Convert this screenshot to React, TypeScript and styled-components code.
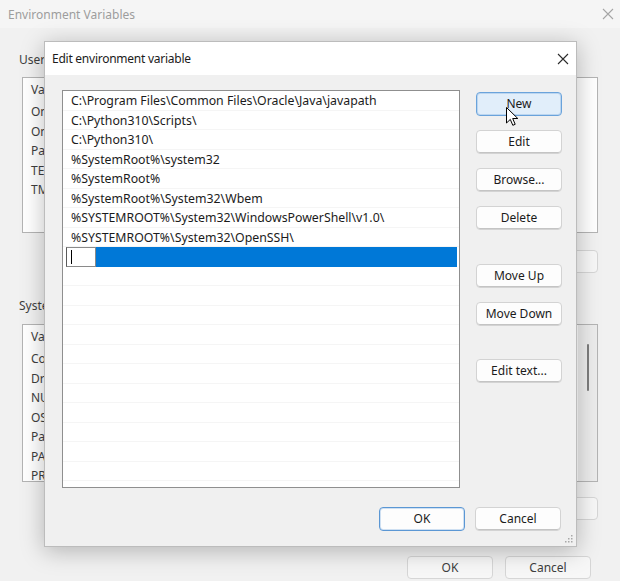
import React from 'react';
import styled, { createGlobalStyle } from 'styled-components';

const GlobalStyle = createGlobalStyle`
  html, body {
    margin: 0;
    padding: 0;
  }
  body {
    font-family: "Noto Sans", "Open Sans", sans-serif;
    font-size: 12px;
    color: #1b1b1b;
    background: #f0f0f0;
  }
  * {
    box-sizing: border-box;
  }
`;

const Desktop = styled.div`
  position: relative;
  width: 620px;
  height: 581px;
  overflow: hidden;
  background: #f1f1f1;
`;

/* ---------- background window (Environment Variables) ---------- */

const BackWindow = styled.div`
  display: flex;
  flex-direction: column;
  height: 100%;
  color: #3e3e3e;
`;

const BackTitleBar = styled.div`
  height: 28px;
  flex: none;
  display: flex;
  align-items: center;
  justify-content: space-between;
  padding: 0 6px 0 8px;
  color: #9d9d9d;
  background: #f5f5f5;
`;

const BackBody = styled.div`
  display: flex;
  flex-direction: column;
  padding: 0 22px;
`;

const GroupLabel = styled.div<{ $top: number }>`
  height: 16px;
  line-height: 16px;
  margin: ${p => p.$top}px 0 0 -3px;
`;

const BackList = styled.div<{ $height: number; $top: number }>`
  display: flex;
  height: ${p => p.$height}px;
  margin-top: ${p => p.$top}px;
  background: #fff;
  border: 1px solid #b4b4b4;
`;

const BackColumn = styled.div`
  flex: 1;
  display: flex;
  flex-direction: column;
`;

const BackHeader = styled.div`
  height: 24px;
  line-height: 24px;
  padding-left: 8px;
  flex: none;
`;

const BackRow = styled.div`
  height: 19.5px;
  line-height: 19.5px;
  padding-left: 8px;
  flex: none;
  white-space: nowrap;
`;

const ScrollTrack = styled.div`
  width: 19px;
  flex: none;
  background: #ececec;
  display: flex;
  justify-content: center;
  padding-top: 19px;
`;

const ScrollThumb = styled.div`
  width: 2px;
  height: 47px;
  border-radius: 1px;
  background: #7c7c7c;
`;

const BackButtonRow = styled.div<{ $top: number }>`
  display: flex;
  justify-content: flex-end;
  gap: 10px;
  margin-top: ${p => p.$top}px;
`;

const BackButton = styled.div`
  width: 86px;
  height: 23px;
  line-height: 21px;
  text-align: center;
  background: #f7f7f7;
  border: 1px solid #d6d6d6;
  border-radius: 4px;
`;

const BackFooter = styled.div`
  display: flex;
  justify-content: flex-end;
  gap: 12px;
  padding: 36px 29px 0 0;
`;

/* ---------- foreground dialog (Edit environment variable) ---------- */

const Dialog = styled.div`
  position: absolute;
  left: 44px;
  top: 41px;
  width: 533px;
  height: 506px;
  display: flex;
  flex-direction: column;
  background: #f0f0f0;
  border: 1px solid #bcbcbc;
  box-shadow: 0 4px 22px rgba(0, 0, 0, 0.26);
`;

const TitleBar = styled.div`
  height: 33px;
  flex: none;
  display: flex;
  align-items: center;
  justify-content: space-between;
  padding: 0 7px 0 7px;
  background: #fff;
  color: #1b1b1b;
  letter-spacing: -0.25px;
`;

const DialogBody = styled.div`
  display: flex;
  gap: 16px;
  padding: 15px 14px 0 17px;
`;

const PathList = styled.div`
  width: 398px;
  height: 398px;
  flex: none;
  background: #fff;
  border: 1px solid #8f8f8f;
  overflow: hidden;
`;

const PathRow = styled.div`
  height: 19.5px;
  line-height: 19px;
  padding-left: 8px;
  font-size: 12.3px;
  white-space: nowrap;
  border-bottom: 1px solid #f5f5f5;
`;

const SelectedRow = styled.div`
  height: 19.5px;
  margin: 0 2px 0 3px;
  display: flex;
  background: #0078d7;
`;

const EditBox = styled.div`
  width: 30px;
  height: 100%;
  background: #fff;
  border: 1px solid #8a8a8a;
  border-left-color: #5a5a5a;
  padding: 2px 0 0 4px;
`;

const Caret = styled.div`
  width: 1px;
  height: 14px;
  background: #000;
`;

const ButtonColumn = styled.div`
  display: flex;
  flex-direction: column;
  gap: 14px;
  padding-top: 2px;
`;

const Spacer = styled.div<{ $h: number }>`
  height: ${p => p.$h}px;
`;

const Button = styled.div<{ $hot?: boolean; $primary?: boolean }>`
  width: 86px;
  height: 24px;
  line-height: 22px;
  text-align: center;
  color: #1b1b1b;
  border-radius: 4px;
  background: ${p => (p.$hot ? '#e1eefa' : '#fdfdfd')};
  border: 1px solid ${p => (p.$hot ? '#6aa3db' : p.$primary ? '#5b97d4' : '#d3d3d3')};
  box-shadow: ${p =>
    p.$hot || p.$primary ? 'inset 0 0 0 1px rgba(120,170,220,0.35)' : 'inset 0 -1px 0 #c4c4c4'};
`;

const DialogFooter = styled.div`
  display: flex;
  justify-content: flex-end;
  gap: 10px;
  padding: 19px 15px 0 0;
`;

const Grip = styled.svg`
  position: absolute;
  right: 3px;
  bottom: 3px;
`;

const Cursor = styled.svg`
  position: absolute;
  left: 506px;
  top: 107px;
`;

const CloseIcon = ({ color }: { color: string }) => (
  <svg width="12" height="12" viewBox="0 0 12 12">
    <path d="M1 1 L11 11 M11 1 L1 11" stroke={color} strokeWidth="1.1" fill="none" />
  </svg>
);

const paths = [
  'C:\\Program Files\\Common Files\\Oracle\\Java\\javapath',
  'C:\\Python310\\Scripts\\',
  'C:\\Python310\\',
  '%SystemRoot%\\system32',
  '%SystemRoot%',
  '%SystemRoot%\\System32\\Wbem',
  '%SYSTEMROOT%\\System32\\WindowsPowerShell\\v1.0\\',
  '%SYSTEMROOT%\\System32\\OpenSSH\\',
];

const userVars = ['OneDrive', 'OneDriveConsumer', 'Path', 'TEMP', 'TMP'];
const systemVars = ['ComSpec', 'DriverData', 'NUMBER_OF_PROCESSORS', 'OS', 'Path', 'PATHEXT', 'PROCESSOR_ARCHITECTURE'];

function App() {
  const emptyRows = Array.from({ length: 12 });

  return (
    <Desktop>
      <GlobalStyle />
      <BackWindow>
        <BackTitleBar>
          <span>Environment Variables</span>
          <CloseIcon color="#a5a5a5" />
        </BackTitleBar>
        <BackBody>
          <GroupLabel $top={24}>User variables for user</GroupLabel>
          <BackList $height={156} $top={9}>
            <BackColumn>
              <BackHeader>Variable</BackHeader>
              {userVars.map(v => (
                <BackRow key={v}>{v}</BackRow>
              ))}
            </BackColumn>
          </BackList>
          <BackButtonRow $top={17}>
            <BackButton>New...</BackButton>
            <BackButton>Edit...</BackButton>
            <BackButton>Delete</BackButton>
          </BackButtonRow>
          <GroupLabel $top={25}>System variables</GroupLabel>
          <BackList $height={158} $top={10}>
            <BackColumn>
              <BackHeader>Variable</BackHeader>
              {systemVars.map(v => (
                <BackRow key={v}>{v}</BackRow>
              ))}
            </BackColumn>
            <ScrollTrack>
              <ScrollThumb />
            </ScrollTrack>
          </BackList>
          <BackButtonRow $top={15}>
            <BackButton>New...</BackButton>
            <BackButton>Edit...</BackButton>
            <BackButton>Delete</BackButton>
          </BackButtonRow>
        </BackBody>
        <BackFooter>
          <BackButton>OK</BackButton>
          <BackButton>Cancel</BackButton>
        </BackFooter>
      </BackWindow>

      <Dialog>
        <TitleBar>
          <span>Edit environment variable</span>
          <CloseIcon color="#2b2b2b" />
        </TitleBar>
        <DialogBody>
          <PathList>
            {paths.map(p => (
              <PathRow key={p}>{p}</PathRow>
            ))}
            <SelectedRow>
              <EditBox>
                <Caret />
              </EditBox>
            </SelectedRow>
            {emptyRows.map((_, i) => (
              <PathRow key={i} />
            ))}
          </PathList>
          <ButtonColumn>
            <Button $hot>New</Button>
            <Button>Edit</Button>
            <Button>Browse...</Button>
            <Button>Delete</Button>
            <Spacer $h={6} />
            <Button>Move Up</Button>
            <Button>Move Down</Button>
            <Spacer $h={5} />
            <Button>Edit text...</Button>
          </ButtonColumn>
        </DialogBody>
        <DialogFooter>
          <Button $primary>OK</Button>
          <Button>Cancel</Button>
        </DialogFooter>
        <Grip width="10" height="10" viewBox="0 0 10 10">
          <g fill="#a8a8a8">
            <rect x="8" y="2" width="1.5" height="1.5" />
            <rect x="5" y="5" width="1.5" height="1.5" />
            <rect x="8" y="5" width="1.5" height="1.5" />
            <rect x="2" y="8" width="1.5" height="1.5" />
            <rect x="5" y="8" width="1.5" height="1.5" />
            <rect x="8" y="8" width="1.5" height="1.5" />
          </g>
        </Grip>
      </Dialog>

      <Cursor width="13" height="20" viewBox="0 0 13 20">
        <path
          d="M0.5 0.5 L0.5 16 L4.3 12.4 L6.8 18.3 L9.2 17.3 L6.7 11.5 L11.8 11.5 Z"
          fill="#fff"
          stroke="#000"
          strokeWidth="1"
          strokeLinejoin="round"
        />
      </Cursor>
    </Desktop>
  );
}

export default App;
